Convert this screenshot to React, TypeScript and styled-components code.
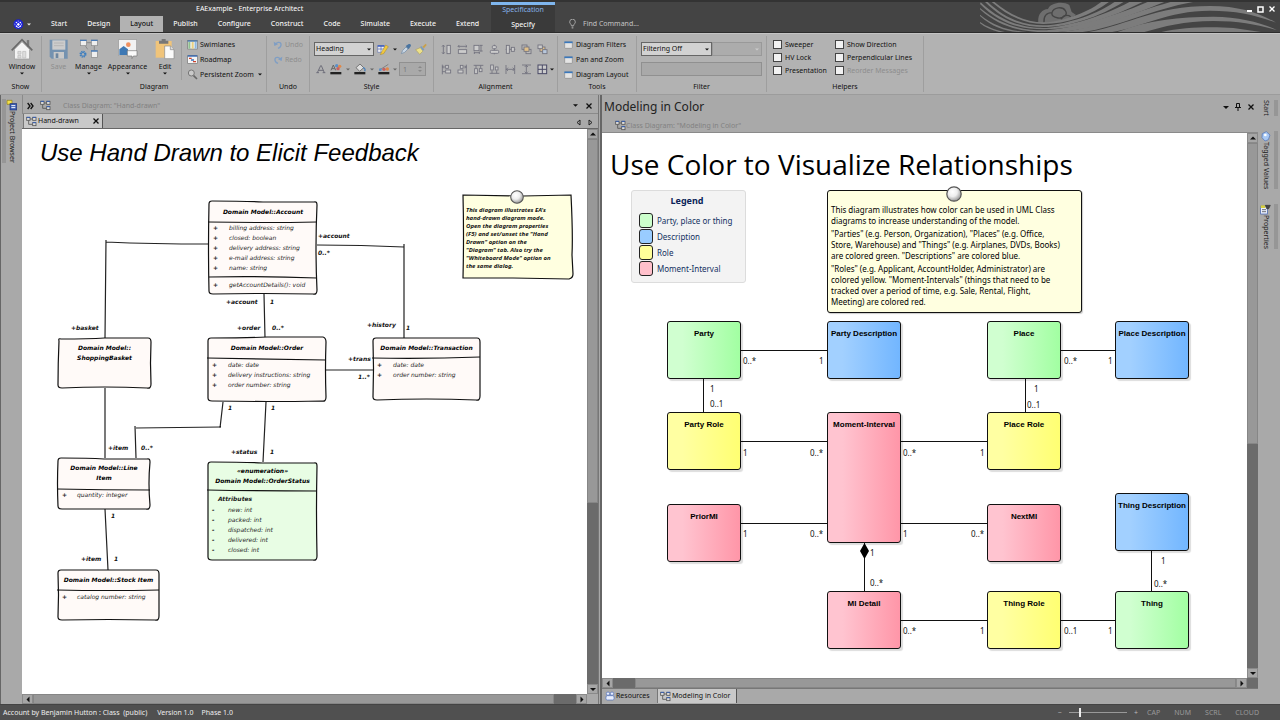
import React from "react";
import styled, { createGlobalStyle, css } from "styled-components";

const INK = "#111";
const UI_FONT = `"Noto Sans", "Open Sans", sans-serif`;
const SKETCH_FONT = `"DejaVu Sans", Verdana, sans-serif`;

const Global = createGlobalStyle`
  *, *::before, *::after { box-sizing: border-box; }
  body { margin: 0; background: #a9a9a9; font-family: ${UI_FONT}; font-size: 7px; line-height: 10px; color: ${INK}; }
  button, input, select { font: inherit; color: inherit; margin: 0; padding: 0; border: 0; background: none; border-radius: 0; }
  h1, h2, p, ul { margin: 0; padding: 0; font-weight: 400; }
  ul { list-style: none; }
  svg { display: block; flex: none; }
`;

const Window = styled.div`
  min-height: 100vh;
  display: flex;
  flex-direction: column;
`;

/* ---------- title bar ---------- */

const Header = styled.header`
  height: 33px;
  display: flex;
  background: #444;
  color: #f2f2f2;
  border-top: 2px solid #333;
  border-bottom: 1px solid #2c2c2c;
`;
const HeaderMain = styled.div`
  width: 491px;
  flex: none;
  display: flex;
  flex-direction: column;
  justify-content: space-between;
`;
const AppTitle = styled.h1`
  font-size: 7px;
  line-height: 14px;
  padding-left: 196px;
  color: #fff;
`;
const MenuRow = styled.nav`
  display: flex;
  height: 16px;
`;
const AppButton = styled.button`
  width: 41px;
  padding-left: 13px;
  display: flex;
  align-items: center;
  gap: 3px;
`;
const MenuTab = styled.button<{ $active?: boolean }>`
  padding: 0 10px;
  font-weight: 500;
  ${(p) =>
    p.$active &&
    css`
      background: #b2b2b2;
      color: #111;
    `}
`;
const ContextTab = styled.button`
  width: 64px;
  flex: none;
  background: #3a3a3a;
  border-top: 3px solid #7fb6ee;
  display: flex;
  flex-direction: column;
  justify-content: space-between;
  align-items: center;
  padding-bottom: 2px;
  font-weight: 500;
`;
const ContextName = styled.span`
  color: #86b4ec;
  font-weight: 400;
`;
const Finder = styled.label`
  align-self: flex-end;
  display: flex;
  align-items: center;
  gap: 7px;
  height: 16px;
  padding-left: 14px;
  input {
    width: 80px;
    outline: none;
  }
  input::placeholder {
    color: #c4c4c4;
    opacity: 1;
  }
`;
const Spacer = styled.div`
  flex: 1;
`;
const HeaderArt = styled.div`
  position: relative;
  width: 300px;
  flex: none;
  overflow: hidden;
`;
const WindowControls = styled.div`
  position: absolute;
  top: 0;
  right: 4px;
  display: flex;
  gap: 4px;
  height: 14px;
  align-items: center;
`;

/* ---------- ribbon ---------- */

const Ribbon = styled.div`
  display: flex;
  height: 62px;
  background: #b2b2b2;
  border-top: 1px solid #c4c4c4;
  border-bottom: 1px solid #9c9c9c;
  padding: 2px 0;
`;
const Group = styled.section<{ $w: number }>`
  width: ${(p) => p.$w}px;
  flex: none;
  display: flex;
  flex-direction: column;
  border-right: 1px solid #9e9e9e;
`;
const GroupBody = styled.div<{ $pad?: number }>`
  flex: 1;
  display: flex;
  padding-left: ${(p) => p.$pad ?? 0}px;
`;
const GroupName = styled.h2`
  font-size: 7px;
  line-height: 10px;
  height: 10px;
  text-align: center;
`;
const BigButton = styled.button<{ $w: number; $off?: boolean }>`
  width: ${(p) => p.$w}px;
  flex: none;
  display: flex;
  flex-direction: column;
  align-items: center;
  color: ${(p) => (p.$off ? "#8d8d8d" : INK)};
  padding-top: 2px;
  span {
    line-height: 10px;
    padding-top: 2px;
  }
`;
const InnerRule = styled.div`
  width: 1px;
  margin: 4px 5px 2px 3px;
  background: #9e9e9e;
`;
const Stack = styled.div<{ $tight?: boolean; $w?: number }>`
  display: flex;
  flex-direction: column;
  padding-top: ${(p) => (p.$tight ? 2 : 1)}px;
  ${(p) => p.$w && `width: ${p.$w}px;`}
  > * {
    height: ${(p) => (p.$tight ? 13 : 15)}px;
  }
`;
const SmallButton = styled.button<{ $off?: boolean; $gap?: number }>`
  display: flex;
  align-items: center;
  gap: ${(p) => p.$gap ?? 2}px;
  color: ${(p) => (p.$off ? "#8d8d8d" : INK)};
  white-space: nowrap;
`;
const Rows = styled.div`
  display: flex;
  flex-direction: column;
  gap: 6px;
  padding-top: 6px;
`;
const ToolRow = styled.div`
  display: flex;
  align-items: center;
  height: 14px;
`;
const IconButton = styled.button<{ $w?: number }>`
  width: ${(p) => p.$w ?? 16}px;
  height: 14px;
  flex: none;
  display: flex;
  align-items: center;
  justify-content: center;
`;
const SelectBox = styled.div<{ $w: number; $off?: boolean }>`
  position: relative;
  width: ${(p) => p.$w}px;
  height: 14px;
  flex: none;
  select {
    appearance: none;
    width: 100%;
    height: 100%;
    padding-left: 1px;
    border: 1px solid ${(p) => (p.$off ? "#999" : "#666")};
    background: ${(p) => (p.$off ? "#acacac" : "#d2d2d2")};
    opacity: 1;
  }
  svg {
    position: absolute;
    right: 3px;
    top: 6px;
    pointer-events: none;
  }
`;
const Field = styled.input`
  width: 121px;
  height: 14px;
  flex: none;
  border: 1px solid #909090;
  background: #a9a9a9;
`;
const Spinner = styled.div`
  position: relative;
  width: 27px;
  height: 14px;
  flex: none;
  input {
    width: 100%;
    height: 100%;
    border: 1px solid #909090;
    background: #a9a9a9;
    padding-left: 3px;
    color: #777;
  }
  svg {
    position: absolute;
    right: 4px;
    top: 3px;
  }
`;
const Check = styled.label<{ $off?: boolean }>`
  display: flex;
  align-items: center;
  gap: 3px;
  white-space: nowrap;
  color: ${(p) => (p.$off ? "#8d8d8d" : INK)};
  input {
    appearance: none;
    width: 9px;
    height: 9px;
    border: 1px solid #444;
    background: #f2f2f2;
  }
`;

/* ---------- workspace ---------- */

const Workspace = styled.main`
  flex: 1;
  display: flex;
  background: #a9a9a9;
`;
const Dock = styled.aside<{ $right?: boolean }>`
  width: 22px;
  flex: none;
  padding: ${(p) => (p.$right ? "5px 2px 0 0" : "4px 0 0 1px")};
  border-left: ${(p) => (p.$right ? 0 : 1)}px solid #666;
  display: flex;
  flex-direction: column;
  gap: ${(p) => (p.$right ? 15 : 0)}px;
`;
const DockTab = styled.button<{ $right?: boolean }>`
  display: flex;
  flex-direction: column;
  align-items: center;
  padding-right: ${(p) => (p.$right ? 1 : 4)}px;
  border-left: ${(p) => (p.$right ? 0 : 4)}px solid #969696;
  border-right: ${(p) => (p.$right ? 4 : 0)}px solid #969696;
  span {
    writing-mode: vertical-rl;
    line-height: 10px;
    color: #222;
  }
`;
const Pane = styled.section<{ $grow: number }>`
  flex: ${(p) => p.$grow} 1 0;
  min-width: 0;
  display: flex;
  flex-direction: column;
`;
const Splitter = styled.div`
  width: 4px;
  flex: none;
  background: #a9a9a9;
  border-left: 1px solid #777;
  border-right: 2px solid #666;
`;
const Crumb = styled.div`
  height: 19px;
  display: flex;
  align-items: center;
  padding: 3px 3px 0 4px;
  border-bottom: 1px solid #8a8a8a;
  border-left: 1px solid #8a8a8a;
`;
const CrumbIcons = styled.span`
  display: flex;
  align-items: center;
  gap: 6px;
`;
const CrumbText = styled.span`
  color: #828282;
  padding-left: 12px;
  flex: 1;
`;
const TabStrip = styled.div<{ $bottom?: boolean }>`
  height: ${(p) => (p.$bottom ? 16 : 15)}px;
  display: flex;
  align-items: ${(p) => (p.$bottom ? "flex-start" : "flex-end")};
  border-bottom: 1px solid ${(p) => (p.$bottom ? "#a9a9a9" : "#666")};
  border-top: ${(p) => (p.$bottom ? 1 : 0)}px solid #777;
  padding: 0 2px 0 1px;
`;
const DocTab = styled.button<{ $active?: boolean; $w: number }>`
  width: ${(p) => p.$w}px;
  height: 14px;
  flex: none;
  display: flex;
  align-items: center;
  gap: 1px;
  padding: 0 3px 0 2px;
  white-space: nowrap;
  ${(p) =>
    p.$active &&
    css`
      background: #c9c9c9;
      border-right: 1px solid #555;
      border-left: 1px solid #777;
    `}
  svg:last-child:not(:first-child) {
    margin-left: auto;
  }
`;
const PaneTitle = styled.div`
  height: 24px;
  display: flex;
  align-items: center;
  padding: 0 1px 0 2px;
  h2 {
    flex: 1;
    font-size: 12px;
    line-height: 16px;
    color: #222;
  }
`;
const PaneCrumb = styled.div`
  height: 14px;
  display: flex;
  align-items: center;
  padding-left: 13px;
  border-bottom: 1px solid #8a8a8a;
  color: #828282;
`;
const MiniButton = styled.button<{ $w?: number }>`
  width: ${(p) => p.$w ?? 13}px;
  height: 12px;
  display: flex;
  align-items: center;
  justify-content: center;
`;
const CanvasRow = styled.div`
  flex: 1;
  display: flex;
`;
const Canvas = styled.div`
  position: relative;
  flex: 1;
  min-height: 540px;
  background: #fff;
  overflow: hidden;
`;
const Bar = styled.div<{ $vertical?: boolean }>`
  display: flex;
  flex: ${(p) => (p.$vertical ? "none" : "1")};
  flex-direction: ${(p) => (p.$vertical ? "column" : "row")};
  ${(p) => (p.$vertical ? "width: 11px;" : "height: 10px;")}
  background: #6b6b6b;
`;
const BarButton = styled.button`
  width: 11px;
  height: 10px;
  flex: none;
  background: #a6a6a6;
  border: 1px solid #8a8a8a;
  display: flex;
  align-items: center;
  justify-content: center;
`;
const BarPart = styled.div<{ $grow: number; $thumb?: boolean }>`
  flex: ${(p) => p.$grow} 1 0;
  background: ${(p) => (p.$thumb ? "#989898" : "#6b6b6b")};
  border: 1px solid ${(p) => (p.$thumb ? "#868686" : "#6b6b6b")};
`;
const BottomBar = styled.div`
  display: flex;
`;
const Corner = styled.div<{ $light?: boolean }>`
  width: 11px;
  background: ${(p) => (p.$light ? "#a9a9a9" : "#6b6b6b")};
`;

/* ---------- status bar ---------- */

const Status = styled.footer`
  height: 16px;
  flex: none;
  display: flex;
  align-items: center;
  background: #505050;
  border-top: 1px solid #444;
  color: #eee;
  padding: 0 21px 0 3px;
  gap: 8px;
`;
const Zoom = styled.label`
  display: flex;
  align-items: center;
  gap: 7px;
  color: #bbb;
  padding-right: 1px;
  input {
    appearance: none;
    width: 58px;
    height: 9px;
    background: linear-gradient(#999, #999) center / 100% 1px no-repeat;
  }
  input::-webkit-slider-thumb {
    appearance: none;
    width: 2px;
    height: 9px;
    background: #eee;
  }
`;
const LockKeys = styled.div`
  display: flex;
  gap: 14px;
  color: #999;
`;

/* ---------- diagrams ---------- */

const Wires = styled.svg`
  position: absolute;
  left: 0;
  top: 0;
`;
const SketchTitle = styled.h2`
  position: absolute;
  left: 18px;
  top: 10px;
  font: italic 24px/28px "Liberation Sans", Arial, sans-serif;
  color: #000;
  white-space: nowrap;
`;
const ColorTitle = styled.h2`
  position: absolute;
  left: 8px;
  top: 12px;
  font: 28px/38px "Open Sans", "Noto Sans", sans-serif;
  color: #000;
  white-space: nowrap;
`;
const SketchLabel = styled.span`
  position: absolute;
  font: italic bold 6px/10px ${SKETCH_FONT};
  white-space: nowrap;
`;
const Multiplicity = styled.span`
  position: absolute;
  font-size: 8px;
  line-height: 12px;
  white-space: nowrap;
`;
const SketchNode = styled.div`
  position: absolute;
  font: italic 6px/10px ${SKETCH_FONT};
  color: #222;
  > svg {
    position: absolute;
    inset: 0;
    overflow: visible;
  }
`;
const SketchName = styled.div<{ $h: number; $top?: boolean }>`
  position: relative;
  height: ${(p) => p.$h}px;
  padding-top: ${(p) => (p.$top ? 5 : 0)}px;
  display: flex;
  flex-direction: column;
  justify-content: ${(p) => (p.$top ? "flex-start" : "center")};
  text-align: center;
  font-weight: 700;
  color: #000;
  white-space: pre-line;
`;
const SketchRow = styled.div<{ $indent: number }>`
  position: relative;
  display: flex;
  padding-left: 4px;
  white-space: nowrap;
  b {
    width: ${(p) => p.$indent - 4}px;
  }
`;
const SketchSection = styled.div<{ $gap: number }>`
  padding-top: ${(p) => p.$gap}px;
`;
const SketchHeading = styled.div`
  position: relative;
  font-weight: 700;
  padding-left: 10px;
  height: 11px;
`;
const SketchNote = styled.div`
  position: absolute;
  left: 441px;
  top: 66px;
  width: 110px;
  height: 84px;
  font: italic bold 6px/8px "Noto Sans", sans-serif;
  > svg {
    position: absolute;
    inset: 0;
    overflow: visible;
  }
  p {
    position: relative;
    padding: 11px 0 0 3px;
    white-space: pre;
    font-weight: 700;
  }
`;
const tones = {
  green: ["#d0ffd0", "#a2ffa2", "#ccffcc"],
  blue: ["#a2d0ff", "#72b6ff", "#99ccff"],
  yellow: ["#ffffa2", "#ffff72", "#ffff99"],
  pink: ["#ffc4d0", "#ff96a8", "#ffc0cb"],
};
type Tone = keyof typeof tones;
const ColorNode = styled.div<{ $tone: Tone }>`
  position: absolute;
  width: 74px;
  border: 1px solid #111;
  border-radius: 3px;
  background: linear-gradient(90deg, ${(p) => tones[p.$tone][0]}, ${(p) => tones[p.$tone][0]} 20%, ${(p) => tones[p.$tone][1]});
  box-shadow: 2px 2px 1px #ddd;
  padding-top: 6px;
  text-align: center;
  font: bold 8px/11px "Liberation Sans", Arial, sans-serif;
  color: #000;
  white-space: nowrap;
`;
const Legend = styled.div`
  position: absolute;
  left: 29px;
  top: 57px;
  width: 115px;
  height: 93px;
  padding: 4px 7px;
  background: #f3f3f3;
  border: 1px solid #dcdcdc;
  border-radius: 3px;
  color: #12305f;
  font-size: 8px;
  h3 {
    margin: 0 3px 6px 0;
    font-size: 9px;
    line-height: 12px;
    text-align: center;
    color: #0a2358;
  }
  ul {
    display: flex;
    flex-direction: column;
    gap: 1px;
  }
  li {
    display: flex;
    align-items: center;
    gap: 4px;
  }
`;
const Swatch = styled.i<{ $tone: Tone }>`
  width: 14px;
  height: 15px;
  border: 1px solid #222;
  border-radius: 3px;
  background: ${(p) => tones[p.$tone][2]};
`;
const ColorNote = styled.div`
  position: absolute;
  left: 225px;
  top: 57px;
  width: 255px;
  height: 123px;
  padding: 13px 0 0 3px;
  border: 1px solid #111;
  border-radius: 3px;
  background: #ffffe0;
  box-shadow: 1px 1px 1px #ccc;
  font-size: 8px;
  line-height: 11px;
  color: #000;
  display: flex;
  flex-direction: column;
  gap: 2px;
  p {
    white-space: pre;
  }
`;

/* ---------- icons ---------- */

const Caret = ({ c = "#111", s = 5 }: { c?: string; s?: number }) => (
  <svg width={s} height="3" viewBox="0 0 6 3"><path d="M0 0H6L3 3Z" fill={c} /></svg>
);
const Cross = ({ c = "#111" }: { c?: string }) => (
  <svg width="6" height="6" viewBox="0 0 6 6"><path d="M0.5 0.5L5.5 5.5M5.5 0.5L0.5 5.5" stroke={c} strokeWidth="1.3" /></svg>
);
const Arrow = ({ d }: { d: "u" | "d" | "l" | "r" }) => {
  const paths = { u: "M1 4.5H7L4 1.5Z", d: "M1 2H7L4 5Z", l: "M5.5 0.5V6.5L2.5 3.5Z", r: "M2.5 0.5V6.5L5.5 3.5Z" };
  return <svg width="8" height="7" viewBox="0 0 8 7"><path d={paths[d]} fill="#111" /></svg>;
};
const DiagramIcon = () => (
  <svg width="11" height="11" viewBox="0 0 33 33" fill="#ddd" stroke="#555" strokeWidth="2.5">
    <path d="M12 9H20M8 13V25H20" fill="none" />
    <rect x="2" y="4" width="10" height="9" /><rect x="20" y="4" width="10" height="9" /><rect x="20" y="20" width="10" height="9" />
    <path d="M2 4H12M20 4H30M20 20H30" stroke="#2a5cc0" />
  </svg>
);
const AppIcon = () => (
  <svg width="11" height="11" viewBox="0 0 33 33">
    <circle cx="16" cy="16" r="13" fill="#fff" stroke="#1c22c4" strokeWidth="4" />
    <g fill="none" stroke="#1c22e0" strokeWidth="3">
      <ellipse cx="16" cy="16" rx="12" ry="5" transform="rotate(45 16 16)" />
      <ellipse cx="16" cy="16" rx="12" ry="5" transform="rotate(-45 16 16)" />
    </g>
    <circle cx="16" cy="16" r="2" fill="#fff" />
  </svg>
);
const HouseIcon = () => (
  <svg width="22" height="22" viewBox="0 0 64 64">
    <rect x="46" y="6" width="7" height="20" fill="#777" />
    <path d="M10 33L32 11L54 33V61H10Z" fill="#f3f3f3" stroke="#999" strokeWidth="2" />
    <path d="M2 36L32 5L62 36" fill="none" stroke="#6a6a6a" strokeWidth="5" />
    <path d="M20 39H29V47H20ZM34 39H43V58H34ZM20 51H29V58H20Z" fill="#dedede" stroke="#bbb" strokeWidth="2" />
  </svg>
);
const SaveIcon = () => (
  <svg width="20" height="22" viewBox="0 0 60 66">
    <path d="M2 5H56V62H8L2 56Z" fill="#7492b0" />
    <rect x="10" y="7" width="39" height="28" fill="#ccc" /><path d="M15 15H44M15 23H44" stroke="#aaa" strokeWidth="2" />
    <rect x="14" y="42" width="31" height="20" fill="#c9c9c9" /><rect x="20" y="46" width="8" height="14" fill="#6d86a0" />
  </svg>
);
const ManageIcon = () => (
  <svg width="20" height="22" viewBox="0 0 60 66">
    <path d="M22 14H38M46 24V38M18 22L26 34" stroke="#777" strokeWidth="2" />
    <g fill="#eee" stroke="#888" strokeWidth="2"><rect x="4" y="6" width="18" height="17" /><rect x="37" y="6" width="18" height="17" /><rect x="37" y="38" width="18" height="20" /></g>
    <path d="M3 7H23M36 7H56M36 39H56" stroke="#4a7cb8" strokeWidth="4" />
    <circle cx="12" cy="49" r="8" fill="none" stroke="#3f7fbf" strokeWidth="5" strokeDasharray="4 2.3" /><circle cx="12" cy="49" r="5.5" fill="none" stroke="#3f7fbf" strokeWidth="3" />
  </svg>
);
const AppearanceIcon = () => (
  <svg width="20" height="22" viewBox="0 0 60 66">
    <rect x="2" y="5" width="54" height="48" fill="#f2f2f2" stroke="#999" strokeWidth="2" />
    <circle cx="31" cy="20" r="7" fill="#ee9060" />
    <path d="M4 34L17 24L30 34V51H4Z" fill="#3d78b4" />
    <path d="M28 38H57V54H46L42 62V54H28Z" fill="#fafafa" stroke="#777" strokeWidth="2" />
  </svg>
);
const EditIcon = () => (
  <svg width="20" height="22" viewBox="0 0 60 66">
    <rect x="2" y="9" width="48" height="50" fill="#f0c47a" />
    <path d="M12 8H20V3H32V8H40V17H12Z" fill="#777" />
    <path d="M29 24H46L57 35V62H29Z" fill="#fafafa" stroke="#888" strokeWidth="2" /><path d="M46 24V35H57" fill="#ddd" stroke="#888" strokeWidth="2" />
  </svg>
);
const SwimIcon = () => (
  <svg width="11" height="11" viewBox="0 0 33 33">
    <rect x="2" y="4" width="29" height="26" fill="#f2f2f2" stroke="#777" strokeWidth="2" />
    <path d="M2 6H31" stroke="#3a6ea5" strokeWidth="4" /><path d="M7 9V29" stroke="#8fbf8f" strokeWidth="6" /><path d="M17 9V29" stroke="#e8d080" strokeWidth="6" /><path d="M26 9V29" stroke="#8ab6e0" strokeWidth="6" />
  </svg>
);
const RoadIcon = () => (
  <svg width="11" height="11" viewBox="0 0 33 33">
    <rect x="2" y="5" width="29" height="23" fill="#f5f5f5" stroke="#777" strokeWidth="2" />
    <path d="M2 6H31" stroke="#2a5fae" strokeWidth="4" /><path d="M6 13H14M18 23H27" stroke="#d0452f" strokeWidth="4" /><path d="M12 18H21" stroke="#2a5fae" strokeWidth="4" />
  </svg>
);
const LensIcon = () => (
  <svg width="11" height="11" viewBox="0 0 33 33">
    <path d="M19 19L30 30" stroke="#666" strokeWidth="5" /><circle cx="13" cy="12" r="9" fill="#c9c9c9" stroke="#777" strokeWidth="3" />
  </svg>
);
const UndoIcon = ({ flip }: { flip?: boolean }) => (
  <svg width="10" height="10" viewBox="0 0 30 30">
    <g transform={flip ? "translate(30 0) scale(-1 1)" : undefined}>
      <path d="M6 15C10 6 22 4 24 12C25 19 20 23 15 25" fill="none" stroke="#7f9ec4" strokeWidth="4" /><path d="M2 5L4 18L15 13Z" fill="#7f9ec4" />
    </g>
  </svg>
);
const WindowIcon = () => (
  <svg width="9" height="8" viewBox="0 0 27 24"><rect x="2" y="2" width="23" height="20" rx="2" fill="#e4e4e4" stroke="#888" strokeWidth="2" /><path d="M1 4H26" stroke="#3a78bd" strokeWidth="5" /></svg>
);
const PaintedIcon = ({ kind }: { kind: "note" | "dropper" | "brush" | "text" | "fill" | "line" | "A" }) => (
  <svg width="12" height="12" viewBox="0 0 36 36">
    {kind === "note" && (<><path d="M2 8H22V28H2Z" fill="#f2f2f2" stroke="#6a78b0" strokeWidth="2" /><path d="M2 9H22" stroke="#2a50c0" strokeWidth="4" /><path d="M2 18H22M12 8V28" stroke="#4560b0" strokeWidth="2" /><path d="M12 30L26 6L34 11L20 32L10 35Z" fill="#f0c840" stroke="#8b6d14" strokeWidth="1" /></>)}
    {kind === "dropper" && (<><path d="M4 32L8 22L18 12L24 18L14 28Z" fill="#c8d6e4" stroke="#708aa5" strokeWidth="2" /><path d="M17 9L26 19L32 10C35 5 30 1 25 4Z" fill="#4a74a0" /></>)}
    {kind === "brush" && (<><path d="M2 20L16 14L24 24L14 34Z" fill="#ece08a" stroke="#a99a50" strokeWidth="1.5" /><path d="M15 12L19 9L28 19L24 24Z" fill="#7f9cba" /><path d="M22 11L32 2L35 6L27 16Z" fill="#c9a04a" /></>)}
    {kind === "A" && <path d="M7 29L17 8H19L28 29M11 22H25M4 29H12M23 29H31" fill="none" stroke="#6e6e7a" strokeWidth="3" />}
    {kind === "text" && (<><path d="M3 22L10 6L17 22M6 17H14" fill="none" stroke="#666" strokeWidth="3" /><circle cx="20" cy="8" r="5" fill="#5a8fc8" /><circle cx="29" cy="10" r="5" fill="#e08848" /><circle cx="24" cy="17" r="5" fill="#c86060" /></>)}
    {kind === "fill" && (<><path d="M6 14L18 3L29 14L17 25Z" fill="#dedede" stroke="#666" strokeWidth="2.5" /><path d="M27 14C34 16 34 20 32 25" fill="none" stroke="#4a80b8" strokeWidth="4" /></>)}
    {kind === "line" && (<><path d="M3 22L31 4" stroke="#777" strokeWidth="2.5" /><circle cx="7" cy="20" r="4" fill="#5a8fc8" /><circle cx="18" cy="19" r="5" fill="#c86060" /><circle cx="28" cy="18" r="5" fill="#e08848" /></>)}
    {(kind === "text" || kind === "fill" || kind === "line") && <rect x="1" y="27" width="33" height="7" fill="#222" />}
  </svg>
);

const alignShapes: Record<string, React.ReactNode> = {
  height: <><path d="M7 4V29M3 8L7 3L11 8M3 25L7 30L11 25" /><rect x="18" y="4" width="10" height="25" fill="#ccc" /></>,
  width: <><path d="M3 7H30M7 3L3 7L7 11M26 3L30 7L26 11" /><rect x="4" y="17" width="25" height="11" fill="#ccc" /></>,
  both: <><rect x="3" y="4" width="15" height="16" fill="#ccc" /><path d="M24 3V22M20 4H29M20 21H29M3 26H20M4 23V30M19 23V30" /></>,
  centerV: <><path d="M16 2V31" /><rect x="10" y="5" width="12" height="9" rx="3" fill="#ccc" /><rect x="4" y="19" width="25" height="9" rx="3" fill="#ccc" /></>,
  centerH: <><path d="M2 16H31" /><rect x="4" y="4" width="9" height="24" fill="#ccc" /><rect x="19" y="10" width="9" height="12" fill="#ccc" /></>,
  front: <><rect x="3" y="3" width="15" height="13" fill="#bbb" /><rect x="15" y="16" width="15" height="13" fill="#bbb" /><rect x="9" y="9" width="15" height="13" fill="#e0c08a" /></>,
  back: <><rect x="9" y="9" width="15" height="13" fill="#e0c08a" /><rect x="3" y="3" width="13" height="11" fill="#ccc" /><rect x="17" y="17" width="13" height="12" fill="#b8c8dc" /></>,
  left: <><path d="M4 2V31M4 9H12M8 5L4 9L8 13M4 23H12" /><rect x="14" y="4" width="8" height="9" fill="#ccc" /><rect x="14" y="18" width="15" height="9" fill="#ccc" /></>,
  right: <><path d="M28 2V31M20 9H28M24 5L28 9L24 13" /><rect x="10" y="4" width="8" height="9" fill="#ccc" /><rect x="3" y="18" width="15" height="9" fill="#ccc" /></>,
  top: <><path d="M2 4H31M9 4V12M23 4V12" /><rect x="5" y="14" width="8" height="15" fill="#ccc" /><rect x="19" y="14" width="8" height="9" fill="#ccc" /></>,
  bottom: <><path d="M2 28H31M9 20V28M23 20V28" /><rect x="5" y="3" width="8" height="15" fill="#ccc" /><rect x="19" y="9" width="8" height="9" fill="#ccc" /></>,
  spaceH: <><path d="M3 3V30M29 3V30M3 16H29M9 11L4 16L9 21M23 11L28 16L23 21" /></>,
  spaceV: <><path d="M3 3H30M3 29H30M16 3V29M11 9L16 4L21 9M11 23L16 28L21 23" /></>,
  grid: <><rect x="3" y="3" width="26" height="26" fill="#ccc" stroke="#4a4a66" strokeWidth="3" /><path d="M16 3V29M3 16H29" stroke="#4a4a66" strokeWidth="3" /></>,
};
const AlignIcon = ({ k }: { k: string }) => (
  <svg width="11" height="11" viewBox="0 0 33 33" fill="none" stroke="#72727e" strokeWidth="2.6">{alignShapes[k]}</svg>
);
const Pin = ({ r }: { r: number }) => (
  <svg width={r * 2} height={r * 2} viewBox="0 0 20 20">
    <defs><radialGradient id="pin" cx="0.4" cy="0.35" r="0.65"><stop offset="0" stopColor="#fff" /><stop offset="0.5" stopColor="#eee" /><stop offset="1" stopColor="#999" /></radialGradient></defs>
    <circle cx="10" cy="10" r="9" fill="url(#pin)" stroke="#555" strokeWidth="1.5" />
  </svg>
);
const PinSpot = styled.div<{ $x: number; $y: number }>`
  position: absolute;
  left: ${(p) => p.$x}px;
  top: ${(p) => p.$y}px;
`;
const HeaderWaves = () => (
  <svg width="300" height="30" viewBox="240 6 900 90" fill="#7c7c7c">
    <path d="M415 68C412 45 425 28 444 27C450 8 490 2 508 15L515 36L528 45L500 62L430 70Z" fill="#6e6e6e" />
    <path d="M432 68C430 48 440 38 456 38M456 38C460 22 488 18 496 32C505 44 490 56 474 54C460 52 454 46 456 38M484 58C488 44 505 44 512 50" fill="none" stroke="#454545" strokeWidth="4" />
    <path d="M282 5C330 45 380 67 430 67S560 40 605 5L628 5C575 45 500 72 430 72C375 71 325 50 274 5Z" />
    <path d="M262 5C320 60 375 76 430 76S580 50 645 5L672 5C600 50 510 81 430 81C370 81 315 65 254 5Z" />
    <path d="M242 7C310 72 380 84 430 84S600 55 690 5L730 5C630 55 530 89 430 88C370 88 300 74 240 12Z" />
    <path d="M240 24C310 82 380 91 430 91S620 60 745 5L795 5C660 60 560 97 440 97C370 96 300 84 240 28Z" />
    <path d="M240 44C290 84 340 95 400 97L370 97C320 95 280 84 240 48ZM240 66C260 80 290 92 320 97L300 97C275 90 255 82 240 70ZM470 97C600 85 690 40 815 5L885 5C760 25 650 85 540 97Z" />
    <path d="M560 97C690 75 760 18 930 18C1020 18 1080 40 1128 68C1070 46 1010 32 930 32C800 32 720 85 630 97Z" />
    <path d="M650 97C740 60 840 50 940 50C1020 50 1090 70 1130 90C1080 76 1020 63 940 63C850 63 790 80 730 97Z" />
    <path d="M780 97C850 80 940 80 1000 84L1090 97Z" />
  </svg>
);

/* ---------- data ---------- */

type Sketch = {
  x: number; y: number; w: number; h: number;
  name: string; head?: number; fill?: string; indent?: number;
  heading?: string; mark?: string; rows?: string[]; gap?: number;
  ops?: string[]; split?: number; wob: number[];
};
const sketches: Sketch[] = [
  { x: 187, y: 72, w: 108, h: 93, name: "Domain Model::Account", head: 21, gap: 1, rows: ["billing address: string", "closed: boolean", "delivery address: string", "e-mail address: string", "name: string"], ops: ["getAccountDetails(): void"], split: 76, wob: [0, 1, -1, 0] },
  { x: 36, y: 209, w: 93, h: 50, name: "Domain Model::\nShoppingBasket", wob: [1, 0, 0, -1] },
  { x: 186, y: 209, w: 118, h: 63, name: "Domain Model::Order", head: 20, gap: 2, rows: ["date: date", "delivery instructions: string", "order number: string"], wob: [0, -1, 0, 2] },
  { x: 351, y: 209, w: 107, h: 62, name: "Domain Model::Transaction", head: 20, gap: 2, rows: ["date: date", "order number: string"], wob: [0, 0, 1, -1] },
  { x: 36, y: 329, w: 92, h: 51, name: "Domain Model::Line\nItem", head: 31, gap: 1, indent: 19, rows: ["quantity: integer"], wob: [0, 1, -1, 1] },
  { x: 36, y: 441, w: 101, h: 50, name: "Domain Model::Stock Item", head: 20, gap: 2, indent: 19, rows: ["catalog number: string"], wob: [0, 0, 1, 0] },
  { x: 186, y: 333, w: 109, h: 98, name: "«enumeration»\nDomain Model::OrderStatus", head: 28, gap: 4, fill: "#e8fde4", heading: "Attributes", mark: "-", rows: ["new: int", "packed: int", "dispatched: int", "delivered: int", "closed: int"], wob: [0, 1, 0, 1] },
];

const outline = (w: number, h: number, [a, b, c, d]: number[]) =>
  `M3 ${a} Q${w / 3} ${a} ${w / 2} ${b} L${w - 3} ${b} Q${w} 0 ${w} 4 Q${w - 1 + c} ${h / 2} ${w} ${h - 4} Q${w} ${h + 1} ${w - 4} ${h} ` +
  `Q${w / 2} ${h - 1 + d} 4 ${h} Q0 ${h} 0 ${h - 3} Q${c} ${h / 2} ${a} 3 Q0 0 3 ${a} Z`;

const sketchLabels: [string, number, number][] = [
  ["+account", 296, 107], ["0..*", 296, 124], ["+account", 204, 173], ["1", 248, 173], ["+order", 215, 199], ["0..*", 250, 199],
  ["+basket", 49, 199], ["+history", 345, 196], ["1", 384, 199], ["+trans", 326, 230], ["1..*", 336, 248], ["1", 206, 279], ["1", 249, 279],
  ["+item", 86, 319], ["0..*", 119, 319], ["+status", 209, 323], ["1", 248, 323], ["1", 89, 387], ["+item", 59, 430], ["1", 92, 430],
];
const nodes: [string, Tone, number, number, number?][] = [
  ["Party", "green", 65, 188], ["Party Description", "blue", 225, 188], ["Place", "green", 385, 188], ["Place Description", "blue", 513, 188],
  ["Party Role", "yellow", 65, 279], ["Moment-Interval", "pink", 225, 279, 131], ["Place Role", "yellow", 385, 279],
  ["PriorMI", "pink", 65, 371], ["NextMI", "pink", 385, 371], ["Thing Description", "blue", 513, 360],
  ["MI Detail", "pink", 225, 458], ["Thing Role", "yellow", 385, 458], ["Thing", "green", 513, 458],
];
const multiplicities: [string, number, number][] = [
  ["0..*", 141, 228], ["1", 217, 228], ["0..*", 462, 228], ["1", 506, 228],
  ["1", 108, 256], ["0..1", 108, 271], ["1", 432, 256], ["0..1", 425, 272],
  ["1", 141, 320], ["0..*", 208, 320], ["0..*", 301, 320], ["1", 378, 320],
  ["1", 141, 401], ["0..*", 208, 401], ["1", 301, 401], ["0..*", 369, 401],
  ["1", 268, 420], ["0..*", 268, 450],
  ["0..*", 301, 498], ["1", 378, 498], ["0..1", 462, 498], ["1", 506, 498],
  ["1", 559, 428], ["0..*", 552, 451],
];

/* ---------- parts ---------- */

const Placed = ({ s }: { s: Sketch }) => (
  <SketchNode style={{ left: s.x, top: s.y, width: s.w, height: s.h }}>
    <svg width={s.w} height={s.h} stroke="#111" strokeWidth="1.2" fill="none">
      <path d={outline(s.w, s.h, s.wob)} fill={s.fill ?? "#fffaf8"} />
      {s.head && <path d={`M-1 ${s.head} Q${s.w / 2} ${s.head + 1} ${s.w} ${s.head + s.wob[3]}`} />}
      {s.split && <path d={`M0 ${s.split} Q${s.w / 2} ${s.split - 1} ${s.w} ${s.split + 1}`} />}
    </svg>
    <SketchName $h={s.head ?? 30} $top={!s.head || s.head > 28}>{s.name}</SketchName>
    <SketchSection $gap={s.gap ?? 0}>
      {s.heading && <SketchHeading>{s.heading}</SketchHeading>}
      {s.rows?.map((r) => (
        <SketchRow key={r} $indent={s.indent ?? 20}><b>{s.mark ?? "+"}</b>{r}</SketchRow>
      ))}
    </SketchSection>
    {s.ops && (
      <SketchSection $gap={7}>
        {s.ops.map((r) => <SketchRow key={r} $indent={20}><b>+</b>{r}</SketchRow>)}
      </SketchSection>
    )}
  </SketchNode>
);

const Scroll = ({ vertical, parts }: { vertical?: boolean; parts: [number, boolean][] }) => (
  <Bar $vertical={vertical}>
    <BarButton aria-label="Scroll back"><Arrow d={vertical ? "u" : "l"} /></BarButton>
    {parts.map(([g, t], i) => <BarPart key={i} $grow={g} $thumb={t} />)}
    <BarButton aria-label="Scroll forward"><Arrow d={vertical ? "d" : "r"} /></BarButton>
  </Bar>
);

const HandDrawn = () => (
  <Canvas>
    <SketchTitle>Use Hand Drawn to Elicit Feedback</SketchTitle>
    <Wires width="565" height="564" fill="none" stroke="#222" strokeWidth="1.2">
      <path d="M187 115Q130 115 84 113M84 111L83 209M242 165L243 209M295 116Q340 116 382 118M382 115L382 209M304 241L351 241M83 259V329" />
      <path d="M201 273L198 299M199 298L114 299M113 297L114 329M244 273L241 333M83 380L86 441" />
    </Wires>
    {sketches.map((s) => <Placed key={s.name} s={s} />)}
    {sketchLabels.map(([t, x, y], i) => <SketchLabel key={i} style={{ left: x, top: y - 5 }}>{t}</SketchLabel>)}
    <SketchNote>
      <svg width="110" height="84"><path d="M0 0L60 1L108 0Q110 40 109 60L110 79Q110 83 106 84L50 83L0 83Q1 40 0 0Z" fill="#ffffe0" stroke="#111" strokeWidth="1.2" /></svg>
      <p>{"This diagram illustrates EA's\nhand-drawn diagram mode.\nOpen the diagram properties\n(F5) and set/unset the \"Hand\nDrawn\" option on the\n\"Diagram\" tab. Also try the\n\"Whiteboard Mode\" option on\nthe same dialog."}</p>
    </SketchNote>
    <PinSpot $x={488} $y={61}><Pin r={7} /></PinSpot>
  </Canvas>
);

const ColorModel = () => (
  <Canvas>
    <ColorTitle>Use Color to Visualize Relationships</ColorTitle>
    <Legend>
      <h3>Legend</h3>
      <ul>
        <li><Swatch $tone="green" />Party, place or thing</li>
        <li><Swatch $tone="blue" />Description</li>
        <li><Swatch $tone="yellow" />Role</li>
        <li><Swatch $tone="pink" />Moment-Interval</li>
      </ul>
    </Legend>
    <ColorNote>
      <p>{"This diagram illustrates how color can be used in UML Class\ndiagrams to increase understanding of the model."}</p>
      <p>{"\"Parties\" (e.g. Person, Organization), \"Places\" (e.g. Office,\nStore, Warehouse) and \"Things\" (e.g. Airplanes, DVDs, Books)\nare colored green. \"Descriptions\" are colored blue."}</p>
      <p>{"\"Roles\" (e.g. Applicant, AccountHolder, Administrator) are\ncolored yellow. \"Moment-Intervals\" (things that need to be\ntracked over a period of time, e.g. Sale, Rental, Flight,\nMeeting) are colored red."}</p>
    </ColorNote>
    <PinSpot $x={344} $y={53}><Pin r={8} /></PinSpot>
    {nodes.map(([t, tone, x, y, h]) => <ColorNode key={t} $tone={tone} style={{ left: x, top: y, height: h ?? 58 }}>{t}</ColorNode>)}
    <Wires width="645" height="545" fill="none" stroke="#111">
      <path d="M139 217.5H225M459 217.5H513M101.5 246V279M423.5 246V279M139 308.5H225M299 308.5H385M139 390.5H225M299 390.5H385M262.5 410V458M299 487.5H385M459 487.5H513M549.5 418V458" />
      <path d="M262.5 410L267 418L262.5 426L258 418Z" fill="#000" stroke="none" />
    </Wires>
    {multiplicities.map(([t, x, y], i) => <Multiplicity key={i} style={{ left: x, top: y - 6 }}>{t}</Multiplicity>)}
  </Canvas>
);

const RibbonBar = () => (
  <Ribbon>
    <Group $w={42}>
      <GroupBody $pad={2}><BigButton $w={40}><HouseIcon /><span>Window</span><Caret s={4} /></BigButton></GroupBody>
      <GroupName>Show</GroupName>
    </Group>
    <Group $w={225}>
      <GroupBody $pad={1}>
        <BigButton $w={31} $off><SaveIcon /><span>Save</span></BigButton>
        <BigButton $w={29}><ManageIcon /><span>Manage</span><Caret s={4} /></BigButton>
        <BigButton $w={49}><AppearanceIcon /><span>Appearance</span><Caret s={4} /></BigButton>
        <BigButton $w={26}><EditIcon /><span>Edit</span><Caret s={4} /></BigButton>
        <InnerRule />
        <Stack>
          <SmallButton><SwimIcon />Swimlanes</SmallButton>
          <SmallButton><RoadIcon />Roadmap</SmallButton>
          <SmallButton><LensIcon />Persistent Zoom&nbsp;<Caret s={4} /></SmallButton>
        </Stack>
      </GroupBody>
      <GroupName>Diagram</GroupName>
    </Group>
    <Group $w={43}>
      <GroupBody $pad={6}>
        <Stack>
          <SmallButton $off><UndoIcon />Undo</SmallButton>
          <SmallButton $off><UndoIcon flip />Redo</SmallButton>
        </Stack>
      </GroupBody>
      <GroupName>Undo</GroupName>
    </Group>
    <Group $w={124}>
      <GroupBody $pad={4}>
        <Rows>
          <ToolRow>
            <SelectBox $w={60}><select aria-label="Style"><option>Heading</option></select><Caret s={4} /></SelectBox>
            <IconButton $w={17} aria-label="Edit style"><PaintedIcon kind="note" /></IconButton>
            <IconButton $w={8} aria-label="Style options"><Caret s={4} /></IconButton>
            <IconButton $w={14} aria-label="Pick"><PaintedIcon kind="dropper" /></IconButton>
            <IconButton $w={16} aria-label="Apply"><PaintedIcon kind="brush" /></IconButton>
          </ToolRow>
          <ToolRow>
            <IconButton $w={14} aria-label="Font"><PaintedIcon kind="A" /></IconButton>
            <IconButton $w={16} aria-label="Text colour"><PaintedIcon kind="text" /></IconButton>
            <IconButton $w={8} aria-label="Text colour options"><Caret s={4} c="#666" /></IconButton>
            <IconButton $w={16} aria-label="Fill colour"><PaintedIcon kind="fill" /></IconButton>
            <IconButton $w={8} aria-label="Fill colour options"><Caret s={4} c="#666" /></IconButton>
            <IconButton $w={15} aria-label="Line colour"><PaintedIcon kind="line" /></IconButton>
            <IconButton $w={8} aria-label="Line colour options"><Caret s={4} c="#666" /></IconButton>
            <Spinner>
              <input aria-label="Line width" defaultValue="1" />
              <svg width="4" height="8" viewBox="0 0 4 8" fill="#888"><path d="M0 3H4L2 1ZM0 5H4L2 7Z" /></svg>
            </Spinner>
          </ToolRow>
        </Rows>
      </GroupBody>
      <GroupName>Style</GroupName>
    </Group>
    <Group $w={124}>
      <GroupBody $pad={4}>
        <Rows>
          <ToolRow>
            {["height", "width", "both", "centerV", "centerH", "front", "back"].map((k) => <IconButton key={k} aria-label={k}><AlignIcon k={k} /></IconButton>)}
          </ToolRow>
          <ToolRow>
            {["left", "right", "top", "bottom", "spaceH", "spaceV", "grid"].map((k) => <IconButton key={k} aria-label={k}><AlignIcon k={k} /></IconButton>)}
            <Caret s={4} />
          </ToolRow>
        </Rows>
      </GroupBody>
      <GroupName>Alignment</GroupName>
    </Group>
    <Group $w={79}>
      <GroupBody $pad={6}>
        <Stack>
          {["Diagram Filters", "Pan and Zoom", "Diagram Layout"].map((t) => <SmallButton key={t} $gap={3}><WindowIcon />{t}</SmallButton>)}
        </Stack>
      </GroupBody>
      <GroupName>Tools</GroupName>
    </Group>
    <Group $w={130}>
      <GroupBody $pad={4}>
        <Rows>
          <ToolRow>
            <SelectBox $w={71}><select aria-label="Filter"><option>Filtering Off</option></select><Caret s={4} /></SelectBox>
            <SelectBox $w={50} $off><select aria-label="Filter set" disabled /><Caret s={4} c="#ccc" /></SelectBox>
          </ToolRow>
          <ToolRow><Field aria-label="Filter text" disabled /></ToolRow>
        </Rows>
      </GroupBody>
      <GroupName>Filter</GroupName>
    </Group>
    <Group $w={157}>
      <GroupBody $pad={6}>
        <Stack $tight $w={62}>
          {["Sweeper", "HV Lock", "Presentation"].map((t) => <Check key={t}><input type="checkbox" />{t}</Check>)}
        </Stack>
        <Stack $tight>
          {["Show Direction", "Perpendicular Lines"].map((t) => <Check key={t}><input type="checkbox" />{t}</Check>)}
          <Check $off><input type="checkbox" disabled />Reorder Messages</Check>
        </Stack>
      </GroupBody>
      <GroupName>Helpers</GroupName>
    </Group>
  </Ribbon>
);

export default function App() {
  return (
    <Window>
      <Global />
      <Header>
        <HeaderMain>
          <AppTitle>EAExample - Enterprise Architect</AppTitle>
          <MenuRow>
            <AppButton aria-label="Application menu"><AppIcon /><Caret s={4} c="#eee" /></AppButton>
            {["Start", "Design", "Layout", "Publish", "Configure", "Construct", "Code", "Simulate", "Execute", "Extend"].map((t) => (
              <MenuTab key={t} $active={t === "Layout"}>{t}</MenuTab>
            ))}
          </MenuRow>
        </HeaderMain>
        <ContextTab><ContextName>Specification</ContextName>Specify</ContextTab>
        <Finder>
          <svg width="7" height="10" viewBox="0 0 21 30" fill="none" stroke="#ccc" strokeWidth="2"><path d="M7 20C7 15 2 14 2 9A8.5 8.5 0 0 1 19 9C19 14 14 15 14 20ZM8 24H13M8 27H13" /></svg>
          <input placeholder="Find Command..." aria-label="Find Command" />
        </Finder>
        <Spacer />
        <HeaderArt>
          <HeaderWaves />
          <WindowControls>
            <MiniButton $w={6} aria-label="Minimise"><svg width="5" height="6" viewBox="0 0 5 6"><path d="M0 5H5" stroke="#fff" strokeWidth="2" /></svg></MiniButton>
            <MiniButton $w={8} aria-label="Maximise"><svg width="7" height="7" viewBox="0 0 7 7"><rect x="1" y="1" width="5" height="5" fill="none" stroke="#fff" strokeWidth="1.5" /></svg></MiniButton>
            <MiniButton $w={8} aria-label="Close"><Cross c="#fff" /></MiniButton>
          </WindowControls>
        </HeaderArt>
      </Header>
      <RibbonBar />
      <Workspace>
        <Dock>
          <DockTab>
            <svg width="12" height="12" viewBox="0 0 36 36"><path d="M3 4H18V16H3Z" fill="#f4e04a" stroke="#8a7a10" strokeWidth="2" /><rect x="12" y="14" width="20" height="19" fill="#3a5cb0" stroke="#20347a" strokeWidth="2" /><path d="M16 20H28M16 26H28" stroke="#fff" strokeWidth="3" /></svg>
            <span>Project Browser</span>
          </DockTab>
        </Dock>
        <Pane $grow={576}>
          <Crumb>
            <CrumbIcons>
              <svg width="7" height="8" viewBox="0 0 21 24" fill="none" stroke="#111" strokeWidth="4"><path d="M2 3L9 12L2 21M11 3L18 12L11 21" /></svg>
              <DiagramIcon />
            </CrumbIcons>
            <CrumbText>Class Diagram: "Hand-drawn"</CrumbText>
            <MiniButton aria-label="Window list"><Caret /></MiniButton>
            <MiniButton aria-label="Close"><Cross /></MiniButton>
          </Crumb>
          <TabStrip>
            <DocTab $active $w={80}><DiagramIcon />Hand-drawn<Cross /></DocTab>
            <Spacer />
            <MiniButton $w={12} aria-label="Previous"><svg width="5" height="7" viewBox="0 0 5 7"><path d="M4 1V6L1 3.5Z" fill="none" stroke="#222" /></svg></MiniButton>
            <MiniButton $w={12} aria-label="Next"><svg width="5" height="7" viewBox="0 0 5 7"><path d="M1 1V6L4 3.5Z" fill="none" stroke="#222" /></svg></MiniButton>
          </TabStrip>
          <CanvasRow>
            <HandDrawn />
            <Scroll vertical parts={[[364, true], [180, false]]} />
          </CanvasRow>
          <BottomBar><Scroll parts={[[524, true], [20, false]]} /><Corner $light /></BottomBar>
        </Pane>
        <Splitter />
        <Pane $grow={656}>
          <PaneTitle>
            <h2>Modeling in Color</h2>
            <MiniButton aria-label="Window list"><Caret s={6} /></MiniButton>
            <MiniButton $w={12} aria-label="Pin"><svg width="6" height="8" viewBox="0 0 6 8" fill="none" stroke="#111"><path d="M1.5 0.5H4.5V4.5H1.5ZM0 4.5H6M3 4.5V8" /></svg></MiniButton>
            <MiniButton aria-label="Close"><Cross /></MiniButton>
          </PaneTitle>
          <PaneCrumb><DiagramIcon />Class Diagram: "Modeling in Color"</PaneCrumb>
          <CanvasRow>
            <ColorModel />
            <Scroll vertical parts={[[301, true], [224, false]]} />
          </CanvasRow>
          <BottomBar><Scroll parts={[[20, false], [604, true]]} /><Corner /></BottomBar>
          <TabStrip $bottom>
            <DocTab $w={54}>
              <svg width="10" height="10" viewBox="0 0 30 30" fill="#e8eefc" stroke="#4a6cc0" strokeWidth="2"><rect x="3" y="14" width="24" height="13" rx="4" /><circle cx="9" cy="8" r="5" /><circle cx="21" cy="8" r="5" /></svg>
              Resources
            </DocTab>
            <DocTab $active $w={80}><DiagramIcon />Modeling in Color</DocTab>
          </TabStrip>
        </Pane>
        <Dock $right>
          <DockTab $right><span>Start</span></DockTab>
          <DockTab $right>
            <svg width="10" height="11" viewBox="0 0 30 33"><path d="M4 8L16 2L27 12L22 26L12 30L3 20Z" fill="#a8c8f4" stroke="#4a70b8" strokeWidth="2" /><circle cx="13" cy="12" r="4" fill="#fff" /></svg>
            <span>Tagged Values</span>
          </DockTab>
          <DockTab $right>
            <svg width="11" height="11" viewBox="0 0 33 33"><rect x="2" y="6" width="20" height="24" fill="#e8eefc" stroke="#3a5cb0" strokeWidth="2" /><path d="M2 4H16V12H2Z" fill="#d8d040" /><path d="M16 4H31L26 14H20ZM6 17H18M6 23H18" fill="#444" stroke="#333" strokeWidth="2" /></svg>
            <span>Properties</span>
          </DockTab>
        </Dock>
      </Workspace>
      <Status>
        <span>Account by Benjamin Hutton : Class&nbsp; (public)&nbsp;</span>
        <span>Version 1.0</span>
        <span>Phase 1.0</span>
        <Spacer />
        <Zoom>−<input type="range" aria-label="Zoom" defaultValue={17} />+</Zoom>
        <LockKeys><span>CAP</span><span>NUM</span><span>SCRL</span><span>CLOUD</span></LockKeys>
      </Status>
    </Window>
  );
}
